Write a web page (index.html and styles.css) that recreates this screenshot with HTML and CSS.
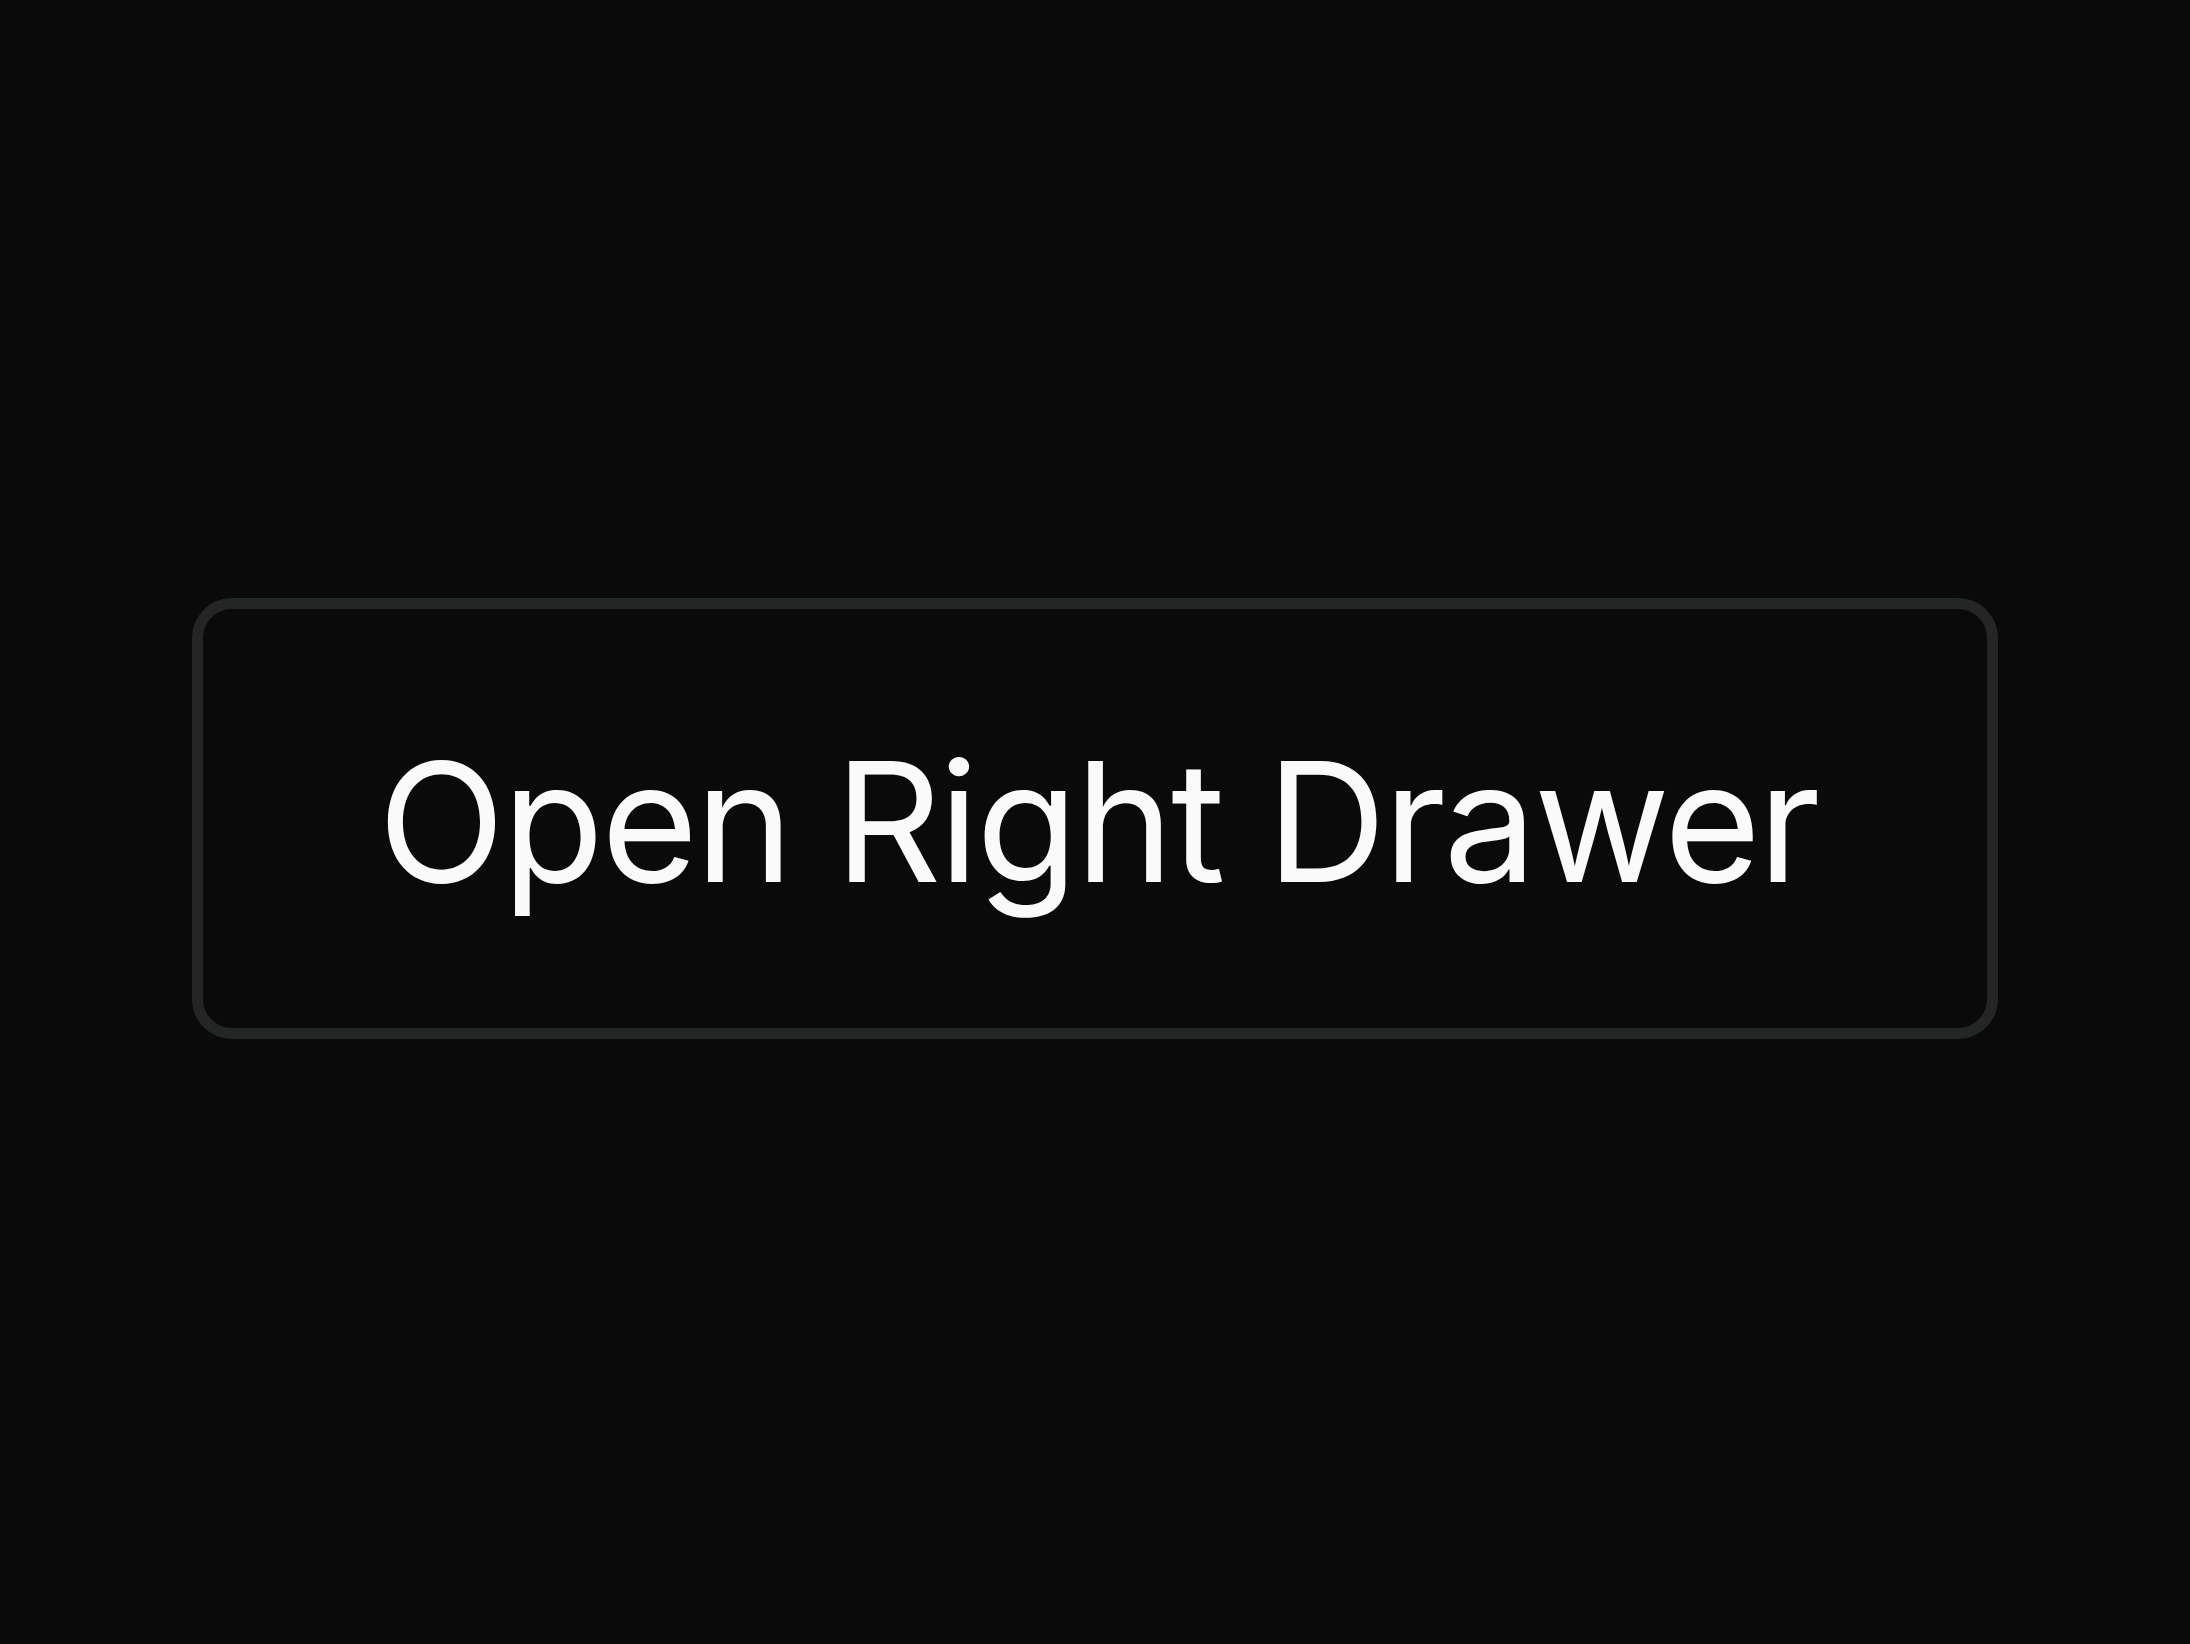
FILE: index.html
```html
<!DOCTYPE html>
<html lang="en">
<head>
<meta charset="utf-8">
<title>Open Right Drawer</title>
<link rel="stylesheet" href="styles.css">
</head>
<body>
<main class="stage">
  <button class="drawer-btn" type="button">Open Right Drawer</button>
</main>
</body>
</html>
```
FILE: styles.css
```css
html, body {
  margin: 0;
  padding: 0;
  background: #0a0a0a;
}
.stage {
  box-sizing: border-box;
  min-height: 100vh;
  display: flex;
  align-items: center;
  justify-content: center;
  padding-bottom: 7px;
}
.drawer-btn {
  box-sizing: border-box;
  width: 1806px;
  height: 441px;
  margin: 0;
  padding: 6px 0 0 6px;
  background: #0a0a0a;
  border: 11px solid #242525;
  border-radius: 40px;
  color: #fafafa;
  font-family: Inter, "Liberation Sans", sans-serif;
  font-size: 166px;
  font-weight: 400;
  line-height: 1;
  letter-spacing: -2.7px;
  cursor: pointer;
}
```
